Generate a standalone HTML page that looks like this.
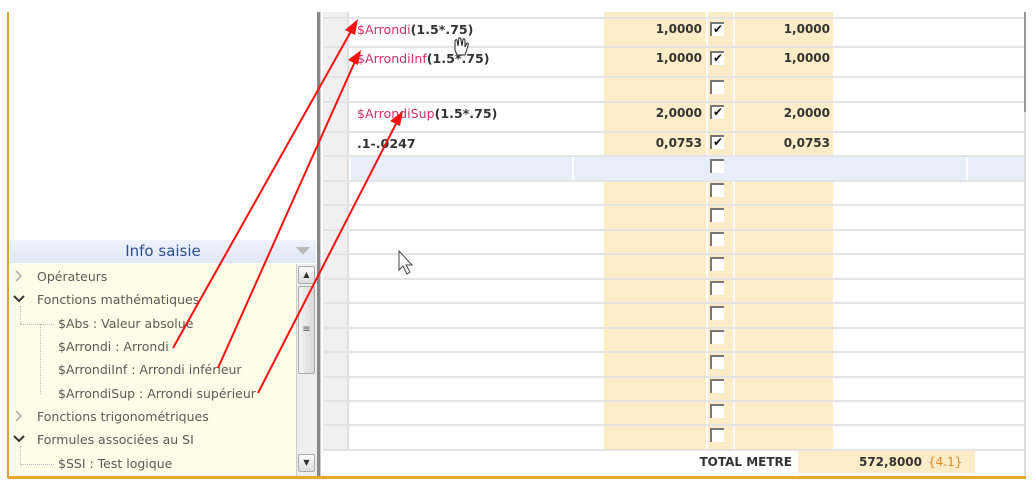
<!DOCTYPE html>
<html><head><meta charset="utf-8"><style>
*{margin:0;padding:0;box-sizing:border-box}
body{width:1032px;height:482px;background:#fff;position:relative;overflow:hidden;font-family:"DejaVu Sans","Liberation Sans",sans-serif}
.a{position:absolute}
.hl{position:absolute;left:323px;width:701px;height:2px;background:#e4e4e4}
.cb{position:absolute;left:710px;width:14px;height:14px;background:#fff;border-left:2px solid #777;border-top:2px solid #777;font-size:12px;line-height:11px;font-weight:bold;color:#111;text-align:center}
.v{position:absolute;font-size:12px;font-weight:bold;color:#333;text-align:right;white-space:nowrap;font-family:"DejaVu Sans",sans-serif}
.g{font-size:12.6px}
.t{position:absolute;font-size:12.5px;color:#5a5a5a;white-space:nowrap}
.p{color:#d0306a;font-weight:normal}
</style></head><body>
<div class="a" style="left:7px;top:12px;width:2px;height:466px;background:#e0a030"></div>
<div class="a" style="left:10px;top:240px;width:306px;height:23px;background:linear-gradient(#eef3fb,#dfe8f6)"></div>
<div class="a" style="left:10px;top:242px;width:306px;text-align:center;font-size:15px;color:#2d4e8c">Info saisie</div>
<div class="a" style="left:296px;top:247px;width:0;height:0;border-left:7px solid transparent;border-right:7px solid transparent;border-top:8px solid #bbb"></div>
<div class="a" style="left:10px;top:264px;width:286px;height:212px;background:#fdfde8"></div>
<div class="a" style="left:296px;top:264px;width:21px;height:212px;background:#eee;border-left:1px solid #ccc"></div>
<div class="a" style="left:298px;top:266px;width:17px;height:18px;border:1px solid #aaa;border-radius:2px;background:linear-gradient(#fafafa,#ddd);font-size:8px;text-align:center;color:#333;line-height:16px">▲</div>
<div class="a" style="left:298px;top:286px;width:17px;height:88px;border:1px solid #aaa;border-radius:2px;background:linear-gradient(90deg,#f4f4f4,#d8d8d8);font-size:10px;text-align:center;color:#555;line-height:86px">≡</div>
<div class="a" style="left:298px;top:454px;width:17px;height:18px;border:1px solid #aaa;border-radius:2px;background:linear-gradient(#fafafa,#ddd);font-size:8px;text-align:center;color:#333;line-height:16px">▼</div>
<svg class="a" style="left:0;top:0" width="40" height="482">
<path d="M16,271 L21,276 L16,281" fill="none" stroke="#aaa" stroke-width="1.5"/>
<path d="M16,411 L21,416 L16,421" fill="none" stroke="#aaa" stroke-width="1.5"/>
<path d="M14,296 L19,301 L24,296" fill="none" stroke="#333" stroke-width="2"/>
<path d="M14,436 L19,441 L24,436" fill="none" stroke="#333" stroke-width="2"/>
</svg>
<div class="t" style="left:37px;top:269px">Opérateurs</div>
<div class="t" style="left:37px;top:292px">Fonctions mathématiques</div>
<div class="t" style="left:58px;top:316px">$Abs : Valeur absolue</div>
<div class="t" style="left:58px;top:339px">$Arrondi : Arrondi</div>
<div class="t" style="left:58px;top:362px">$ArrondiInf : Arrondi inférieur</div>
<div class="t" style="left:58px;top:386px">$ArrondiSup : Arrondi supérieur</div>
<div class="t" style="left:37px;top:409px">Fonctions trigonométriques</div>
<div class="t" style="left:37px;top:432px">Formules associées au SI</div>
<div class="t" style="left:58px;top:456px">$SSI : Test logique</div>
<div class="a" style="left:20px;top:306px;width:1px;height:18px;border-left:1px dotted #bbb"></div>
<div class="a" style="left:20px;top:324px;width:34px;border-top:1px dotted #bbb"></div>
<div class="a" style="left:40px;top:324px;height:70px;border-left:1px dotted #bbb"></div>
<div class="a" style="left:20px;top:446px;height:18px;border-left:1px dotted #bbb"></div>
<div class="a" style="left:20px;top:464px;width:34px;border-top:1px dotted #bbb"></div>
<div class="a" style="left:317px;top:12px;width:4px;height:466px;background:#888;border-right:1px solid #ccc"></div>
<div class="a" style="left:323px;top:12px;width:26px;height:437px;background:#f0f0f0;border-right:2px solid #e0e0e0"></div>
<div class="a" style="left:604px;top:12px;width:102px;height:437px;background:#fdecc8"></div>
<div class="a" style="left:708px;top:12px;width:25px;height:437px;background:#fdecc8"></div>
<div class="a" style="left:735px;top:12px;width:98px;height:437px;background:#fdecc8"></div>
<div class="a" style="left:351px;top:157px;width:673px;height:23px;background:#e7eefa"></div>
<div class="a" style="left:572px;top:157px;width:2px;height:23px;background:#fff"></div>
<div class="a" style="left:966px;top:157px;width:2px;height:23px;background:#fff"></div>
<div class="hl" style="top:17px"></div><div class="hl" style="top:46px"></div><div class="hl" style="top:76px"></div>
<div class="hl" style="top:101px"></div><div class="hl" style="top:131px"></div><div class="hl" style="top:155px"></div>
<div class="hl" style="top:180px"></div><div class="hl" style="top:204px"></div><div class="hl" style="top:229px"></div>
<div class="hl" style="top:253px"></div><div class="hl" style="top:278px"></div><div class="hl" style="top:302px"></div>
<div class="hl" style="top:327px"></div><div class="hl" style="top:351px"></div><div class="hl" style="top:376px"></div>
<div class="hl" style="top:400px"></div><div class="hl" style="top:424px"></div><div class="hl" style="top:449px"></div>
<div class="a" style="left:1024px;top:12px;width:2px;height:466px;background:#ddd"></div>
<div class="a" style="left:1024px;top:12px;width:2px;height:100px;background:#999"></div>
<div class="cb" style="top:22px">✔</div><div class="cb" style="top:51px">✔</div><div class="cb" style="top:80px"></div>
<div class="cb" style="top:105px">✔</div><div class="cb" style="top:135px">✔</div><div class="cb" style="top:159px"></div>
<div class="cb" style="top:183px"></div><div class="cb" style="top:208px"></div><div class="cb" style="top:232px"></div>
<div class="cb" style="top:257px"></div><div class="cb" style="top:281px"></div><div class="cb" style="top:306px"></div>
<div class="cb" style="top:330px"></div><div class="cb" style="top:355px"></div><div class="cb" style="top:379px"></div>
<div class="cb" style="top:404px"></div><div class="cb" style="top:428px"></div>
<div class="v g" style="left:357px;top:22px;text-align:left"><span class="p">$Arrondi</span>(1.5*.75)</div>
<div class="v g" style="left:357px;top:51px;text-align:left"><span class="p">$ArrondiInf</span>(1.5*.75)</div>
<div class="v g" style="left:357px;top:106px;text-align:left"><span class="p">$ArrondiSup</span>(1.5*.75)</div>
<div class="v g" style="left:357px;top:136px;text-align:left">.1-.0247</div>
<div class="v" style="left:600px;width:102px;top:22px">1,0000</div>
<div class="v" style="left:600px;width:102px;top:51px">1,0000</div>
<div class="v" style="left:600px;width:102px;top:106px">2,0000</div>
<div class="v" style="left:600px;width:102px;top:136px">0,0753</div>
<div class="v" style="left:730px;width:100px;top:22px">1,0000</div>
<div class="v" style="left:730px;width:100px;top:51px">1,0000</div>
<div class="v" style="left:730px;width:100px;top:106px">2,0000</div>
<div class="v" style="left:730px;width:100px;top:136px">0,0753</div>
<div class="a" style="left:798px;top:451px;width:177px;height:22px;background:#fdecc8"></div>
<div class="v" style="left:660px;width:132px;top:455px;color:#333">TOTAL METRE</div>
<div class="v" style="left:822px;width:100px;top:455px">572,8000</div>
<div class="v" style="left:928px;top:455px;color:#e08a20;font-weight:normal">{4.1}</div>
<div class="a" style="left:8px;top:476px;width:1018px;height:3px;background:#e8a830"></div>
<svg class="a" style="left:0;top:0" width="1032" height="482">
<g stroke="#ff1010" stroke-width="2" fill="#ff1010">
<line x1="173" y1="348" x2="354" y2="26"/><polygon points="358,19 345,30 355,35" stroke="none"/>
<line x1="218" y1="368" x2="357" y2="57"/><polygon points="361,50 348,60 358,65" stroke="none"/>
<line x1="258" y1="393" x2="399" y2="118"/><polygon points="403,111 390,121 400,126" stroke="none"/>
</g>
<path d="M399,251 L399,270 L403,266 L407,274 L410,272 L406,265 L412,265 Z" fill="#fff" stroke="#444" stroke-width="1"/>
<path d="M455,50 L455,42 Q455,39 457,40 L458,46 L459,38 Q461,37 461,40 L462,46 L463,39 Q465,38 465,41 L465,47 L467,43 Q469,43 468,46 L465,55 L457,55 Z" fill="#fff" stroke="#222" stroke-width="1"/>
</svg>
</body></html>
